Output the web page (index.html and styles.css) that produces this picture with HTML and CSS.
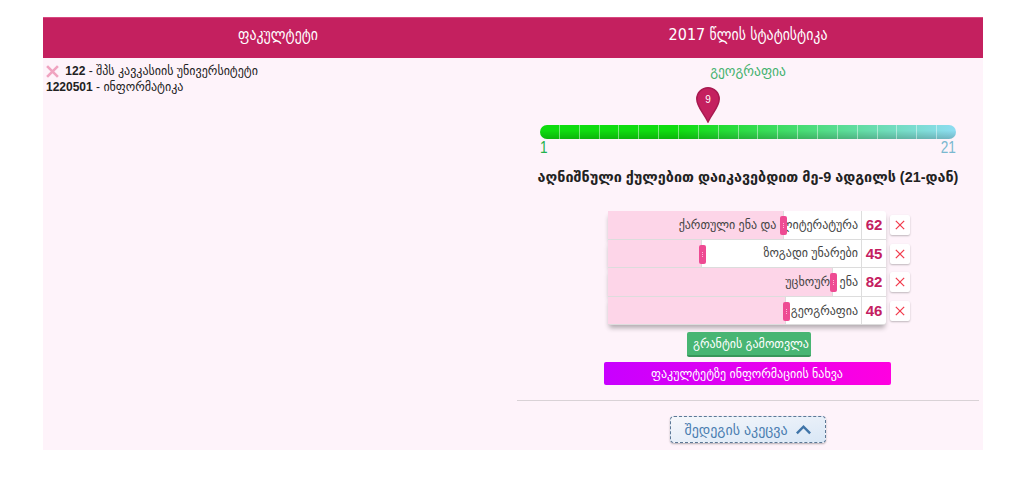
FILE: index.html
```html
<!DOCTYPE html>
<html>
<head>
    <title>სტატისტიკა</title>
    <link rel="stylesheet" href="styles.css">
</head>
<body>
    <div class="page">
        <!-- Left column -->
        <div class="column">
            <div class="head">ფაკულტეტი</div>
            <div class="faculty">
                <div class="faculty-line">
                    <svg class="remove-icon" viewBox="0 0 12 12"><path d="M1 1l10 10M11 1L1 11"/></svg>
                    <b>122</b> - შპს კავკასიის უნივერსიტეტი
                </div>
                <div class="faculty-line"><b>1220501</b> - ინფორმატიკა</div>
            </div>
        </div>

        <!-- Right column -->
        <div class="column">
            <div class="head"><span class="head-year">2017</span> წლის სტატისტიკა</div>
            <div class="stats">
                <div class="subject">გეოგრაფია</div>
                <div class="scale-wrap">
                    <div class="pin-row">
                        <svg class="pin" viewBox="0 0 24 36">
                            <path d="M12 35C8 26 .8 20 .8 12a11.2 11.2 0 0 1 22.4 0C23.2 20 16 26 12 35z" fill="#c4205f" stroke="#a81a50" stroke-width="1.5"/>
                        </svg>
                        <span class="pin-num">9</span>
                    </div>
                    <div class="scale" id="scale"></div>
                    <div class="scale-labels"><span class="from">1</span><span class="to">21</span></div>
                </div>
                <p class="advice">აღნიშნული ქულებით დაიკავებდით მე-9 ადგილს (21-დან)</p>

                <div class="scores">
                    <div class="score-row">
                        <div class="score-table">
                            <div class="score-cell">
                                <div class="score-fill" style="width:176px"></div>
                                <span class="score-name">ქართული ენა და ლიტერატურა</span>
                                <div class="score-handle" style="left:172px"></div>
                            </div>
                            <div class="score-num">62</div>
                        </div>
                        <button class="del"><svg viewBox="0 0 12 12"><path d="M1 1l10 10M11 1L1 11"/></svg></button>
                    </div>
                    <div class="score-row">
                        <div class="score-table">
                            <div class="score-cell">
                                <div class="score-fill" style="width:94px"></div>
                                <span class="score-name">ზოგადი უნარები</span>
                                <div class="score-handle" style="left:91px"></div>
                            </div>
                            <div class="score-num">45</div>
                        </div>
                        <button class="del"><svg viewBox="0 0 12 12"><path d="M1 1l10 10M11 1L1 11"/></svg></button>
                    </div>
                    <div class="score-row">
                        <div class="score-table">
                            <div class="score-cell">
                                <div class="score-fill" style="width:225px"></div>
                                <span class="score-name">უცხოური ენა</span>
                                <div class="score-handle" style="left:222px"></div>
                            </div>
                            <div class="score-num">82</div>
                        </div>
                        <button class="del"><svg viewBox="0 0 12 12"><path d="M1 1l10 10M11 1L1 11"/></svg></button>
                    </div>
                    <div class="score-row">
                        <div class="score-table">
                            <div class="score-cell">
                                <div class="score-fill" style="width:178px"></div>
                                <span class="score-name">გეოგრაფია</span>
                                <div class="score-handle" style="left:175px"></div>
                            </div>
                            <div class="score-num">46</div>
                        </div>
                        <button class="del"><svg viewBox="0 0 12 12"><path d="M1 1l10 10M11 1L1 11"/></svg></button>
                    </div>
                </div>

                <button class="btn-grant">გრანტის გამოთვლა</button>
                <button class="btn-info">ფაკულტეტზე ინფორმაციის ნახვა</button>
                <hr class="divider">
                <button class="btn-results">შედეგის აკეცვა
                    <svg viewBox="0 0 18 11"><path d="M2 9.5l7-7 7 7"/></svg>
                </button>
            </div>
        </div>
    </div>
    <script src="scale.js"></script>
</body>
</html>
```

FILE: styles.css
```css
body {
    margin: 0;
    background: #fff;
    font-family: "Liberation Sans", "DejaVu Sans", sans-serif;
    font-size: 12px;
    color: #222;
}
.page {
    display: grid;
    grid-template-columns: 470px 470px;
    margin: 17px 0 35px 43px;
    width: 940px;
    height: 433px;
    background: #fef3fa;
}
.head {
    height: 41px;
    background: #c4205f;
    border-top: 1px solid #d8487f;
    box-sizing: border-box;
    color: #fff;
    font-family: "DejaVu Sans Condensed", "DejaVu Sans", sans-serif;
    font-size: 15.4px;
    line-height: 34px;
    text-align: center;
}
.head-year {
    font-size: 16px;
}
.faculty {
    padding: 5px 3px;
}
.faculty-line {
    height: 16px;
    line-height: 16px;
    white-space: nowrap;
}
.remove-icon {
    width: 13px;
    height: 13px;
    margin-right: 3px;
    vertical-align: -3px;
}
.remove-icon path {
    fill: none;
    stroke: #f0a3c0;
    stroke-width: 2.4;
}
.stats {
    display: flex;
    flex-direction: column;
    align-items: center;
}
.subject {
    margin-top: 2px;
    height: 22px;
    line-height: 22px;
    color: #45b26f;
    font-family: "DejaVu Sans Condensed", "DejaVu Sans", sans-serif;
    font-size: 15px;
}
.scale-wrap {
    width: 416px;
    margin-top: 5px;
}
.pin-row {
    position: relative;
    height: 38px;
}
.pin {
    position: absolute;
    left: 156px;
    top: 0;
    width: 24px;
    height: 36px;
}
.pin-num {
    position: absolute;
    left: 156px;
    top: 7px;
    width: 24px;
    text-align: center;
    color: #fff;
    font-size: 10px;
}
.scale {
    display: flex;
    height: 14px;
    border-radius: 7px;
    overflow: hidden;
    background: linear-gradient(to right, #0fdc0f, #0fdc0f 33%, #8edcf2);
}
.scale span {
    flex: 1;
    border-right: 1px solid rgba(255, 255, 255, .45);
    background: linear-gradient(to bottom, rgba(0, 0, 0, 0) 40%, rgba(0, 0, 0, .18));
}
.scale span:last-child {
    border-right: 0;
}
.scale-labels {
    display: flex;
    justify-content: space-between;
    height: 18px;
    line-height: 18px;
    font-size: 17px;
}
.from {
    color: #22b14c;
    transform: scaleX(.8);
    transform-origin: left;
}
.to {
    color: #7ab8d0;
    transform: scaleX(.8);
    transform-origin: right;
}
.advice {
    margin: 10px 0 0;
    font-size: 14.4px;
    font-weight: bold;
    line-height: 20px;
}
.scores {
    margin-top: 24px;
    margin-left: 22px;
    display: flex;
    flex-direction: column;
}
.score-row {
    display: flex;
    align-items: center;
    height: 28.6px;
}
.score-table {
    display: flex;
    width: 278px;
    height: 100%;
    background: #fff;
    border-bottom: 1px solid #ddd;
    box-sizing: border-box;
    box-shadow: 0 4px 5px -1px rgba(0, 0, 0, .3);
}
.score-row:first-child .score-table {
    border-radius: 3px 3px 0 0;
}
.score-row:last-child .score-table {
    border-radius: 0 0 3px 3px;
}
.score-cell {
    position: relative;
    flex: 1;
    display: flex;
    align-items: center;
    justify-content: flex-end;
    padding-right: 3px;
    border-right: 1px solid #ddd;
    color: #444;
}
.score-fill {
    position: absolute;
    left: 0;
    top: 0;
    bottom: 0;
    background: #fdd5e8;
    border-right: 1px solid #ddd;
    box-sizing: border-box;
}
.score-name {
    position: relative;
}
.score-handle {
    position: absolute;
    top: 5px;
    width: 7px;
    height: 19px;
    border-radius: 2px;
    background: #ee4b93;
}
.score-handle::after {
    content: "";
    position: absolute;
    left: 3px;
    top: 7px;
    width: 1px;
    height: 5px;
    background: repeating-linear-gradient(to bottom, #fbb6d4 0, #fbb6d4 1px, transparent 1px, transparent 2px);
}
.score-num {
    width: 24px;
    text-align: center;
    line-height: 28px;
    font-size: 15px;
    font-weight: bold;
    color: #c4205f;
}
.del {
    width: 20px;
    height: 20px;
    margin-left: 4px;
    padding: 5px;
    border: 0;
    border-radius: 2px;
    background: #fff;
    box-shadow: 0 1px 2px rgba(0, 0, 0, .25);
}
.del svg {
    display: block;
    width: 10px;
    height: 10px;
}
.del path {
    fill: none;
    stroke: #f23b4c;
    stroke-width: 1.5;
}
.btn-grant {
    margin-top: 7px;
    margin-left: 2px;
    width: 124px;
    height: 25px;
    border: 0;
    border-bottom: 2px solid #38965a;
    border-radius: 2px;
    background: #48b573;
    color: #fff;
    font: 12px "Liberation Sans", "DejaVu Sans", sans-serif;
    white-space: nowrap;
}
.btn-info {
    margin-top: 5px;
    margin-right: 2px;
    width: 287px;
    height: 23px;
    border: 0;
    border-radius: 2px;
    background: linear-gradient(to right, #c800ff, #ff00e0);
    color: #fff;
    font: 12px "Liberation Sans", "DejaVu Sans", sans-serif;
}
.divider {
    width: 462px;
    margin: 15px 0 0;
    border: 0;
    border-top: 1px solid #d9d2d6;
}
.btn-results {
    display: flex;
    align-items: center;
    justify-content: center;
    gap: 7px;
    margin-top: 15px;
    width: 156px;
    height: 27px;
    border: 1px dashed #5c7896;
    border-radius: 4px;
    background: linear-gradient(to bottom right, #f6f7fb, #d9e7f6);
    box-shadow: 0 1px 2px rgba(0, 0, 0, .3);
    color: #4a7db0;
    font: 14px "Liberation Sans", "DejaVu Sans", sans-serif;
}
.btn-results svg {
    width: 17px;
    height: 11px;
}
.btn-results path {
    fill: none;
    stroke: #3f74a8;
    stroke-width: 2.6;
}
```

FILE: scale.js
```js
// Build the 21 segments of the rank scale
const scale = document.getElementById('scale');
for (let i = 0; i < 21; i++) {
    scale.appendChild(document.createElement('span'));
}
```
